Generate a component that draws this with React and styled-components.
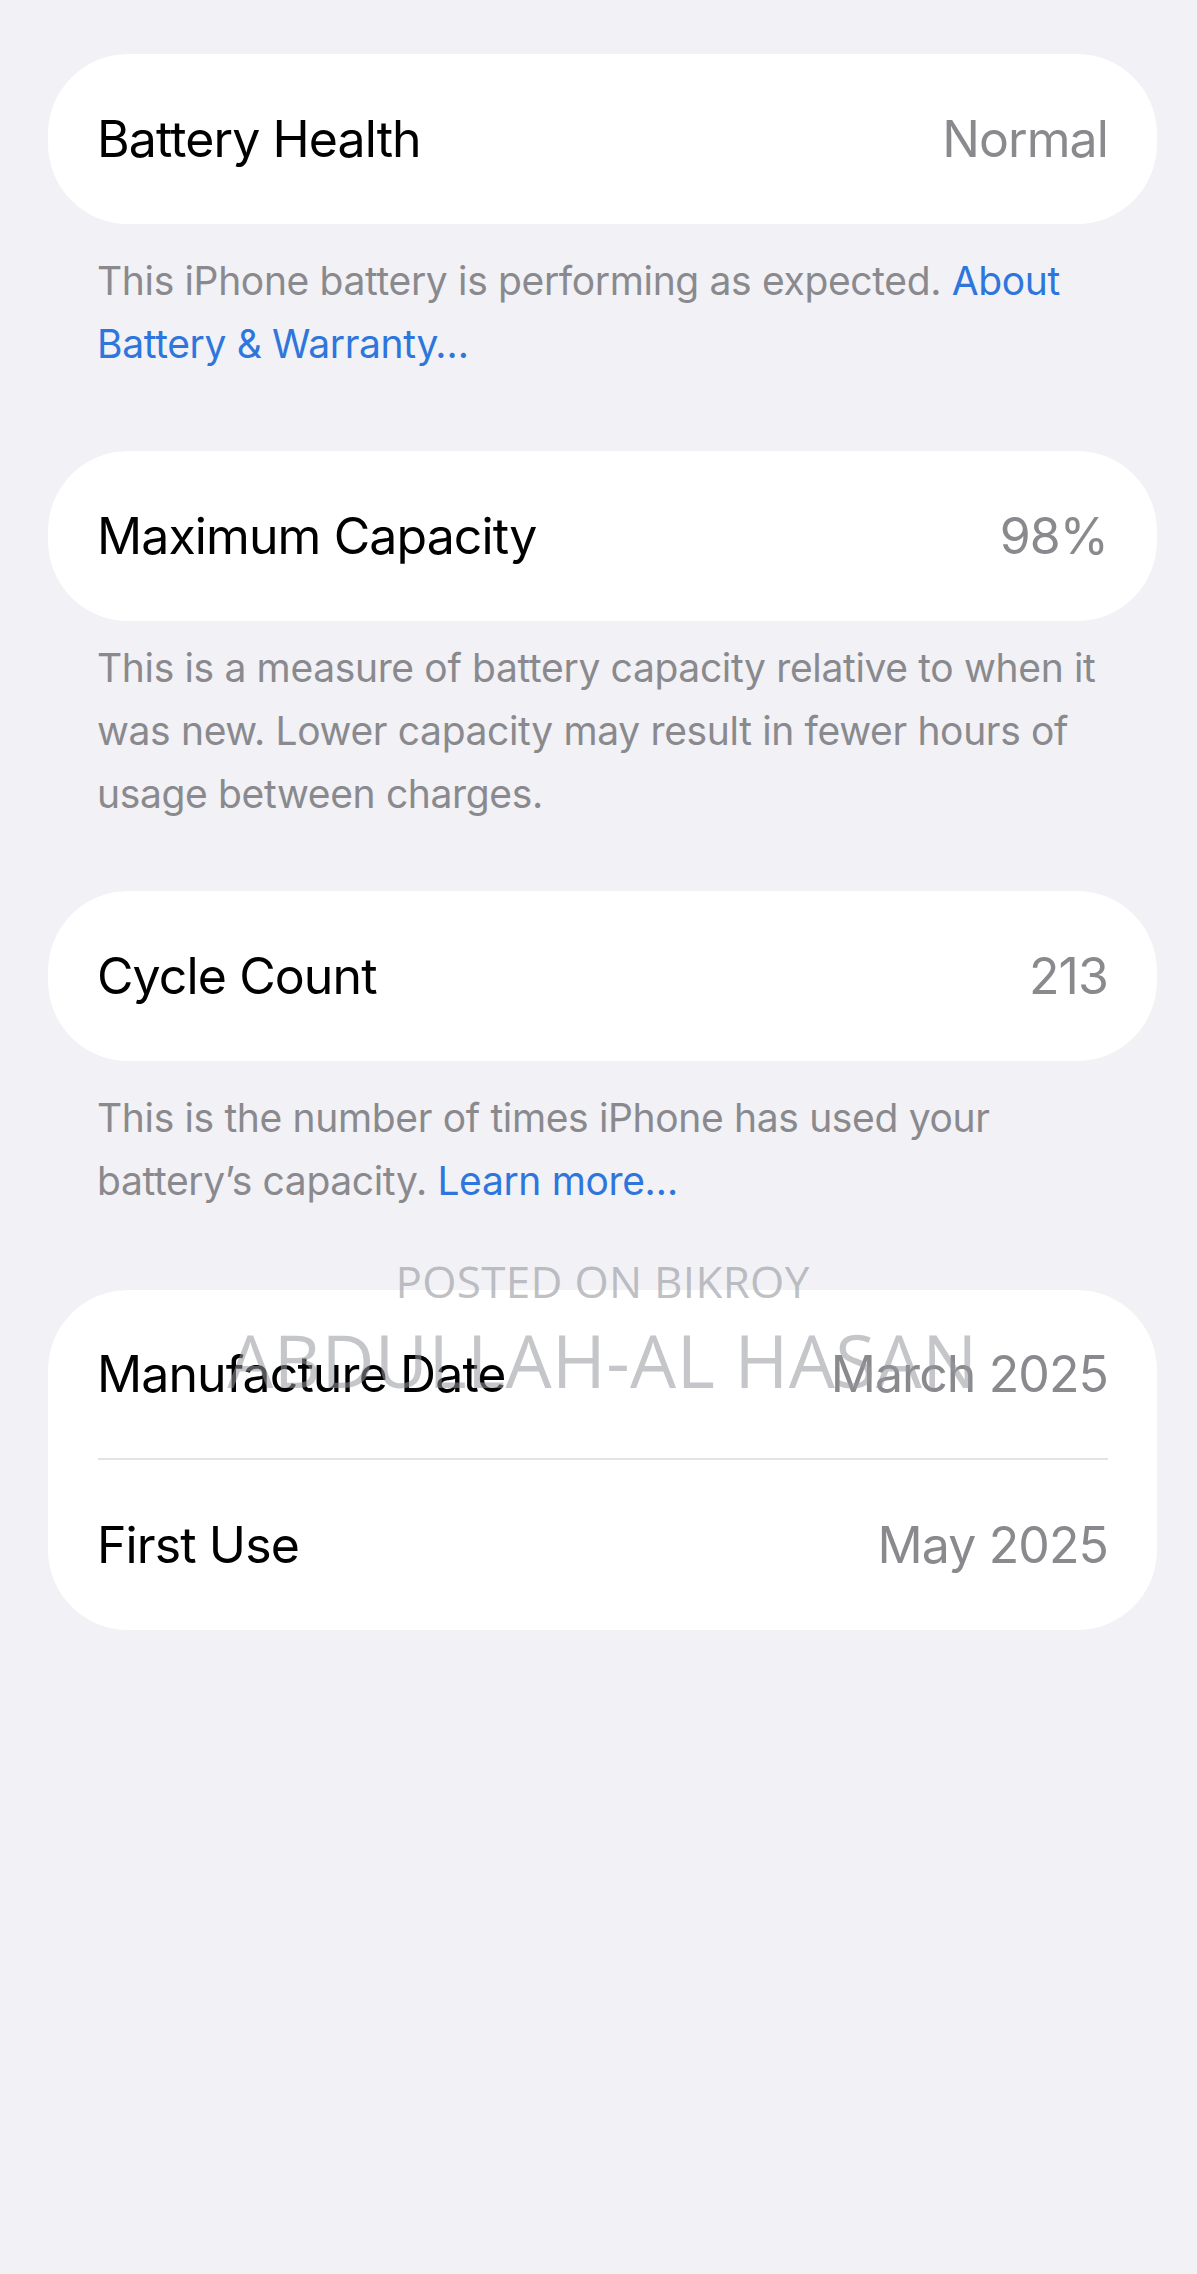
import React from "react";
import styled, { createGlobalStyle } from "styled-components";

const GlobalStyle = createGlobalStyle`
  html, body {
    margin: 0;
    padding: 0;
    background: #f1f1f6;
  }
  body {
    font-family: Inter, "Noto Sans", sans-serif;
    -webkit-font-smoothing: antialiased;
  }
`;

const Page = styled.main`
  min-height: 2274px;
  box-sizing: border-box;
  padding: 54px 40px 0 48px;
  background: #f1f1f6;
`;

const Card = styled.section`
  position: relative;
  background: #ffffff;
  border-radius: 80px;
  display: flex;
  flex-direction: column;
`;

const Row = styled.div`
  height: ${(p) => p.$height || 170}px;
  display: flex;
  align-items: center;
  justify-content: space-between;
  padding: 0 49px 0 49px;
  font-size: 50px;
  letter-spacing: -0.9px;
`;

const Label = styled.span`
  color: #000000;
`;

const Value = styled.span`
  color: #8a8a8e;
`;

const Divider = styled.div`
  margin: 0 49px 0 50px;
  height: 2px;
  background: #e3e3e7;
`;

const Footer = styled.p`
  margin: ${(p) => p.$top}px 0 ${(p) => p.$bottom}px;
  padding: 0 49px 0 49px;
  font-size: 39px;
  line-height: 63px;
  color: #8a8a8e;
  letter-spacing: -0.35px;

  a {
    color: #2f76dc;
    text-decoration: none;
  }
`;

const Watermark = styled.div`
  position: absolute;
  top: -31px;
  left: 0;
  right: 0;
  display: flex;
  flex-direction: column;
  align-items: center;
  gap: 20px;
  font-family: "Open Sans", "Noto Sans", sans-serif;
  pointer-events: none;
`;

const MarkSmall = styled.span`
  font-size: 44px;
  line-height: 44px;
  letter-spacing: 0.3px;
  color: rgba(150, 152, 158, 0.6);
`;

const MarkLarge = styled.span`
  font-size: 73px;
  line-height: 73px;
  letter-spacing: 0.4px;
  color: rgba(150, 152, 156, 0.55);
`;

const InfoCard = ({ label, value }) => (
  <Card>
    <Row>
      <Label>{label}</Label>
      <Value>{value}</Value>
    </Row>
  </Card>
);

export default function App() {
  return (
    <>
      <GlobalStyle />
      <Page>
        <InfoCard label="Battery Health" value="Normal" />
        <Footer $top={25} $bottom={76}>
          This iPhone battery is performing as expected. <a href="#">About</a>
          <br />
          <a href="#">Battery &amp; Warranty…</a>
        </Footer>

        <InfoCard label="Maximum Capacity" value="98%" />
        <Footer $top={15} $bottom={66}>
          This is a measure of battery capacity relative to when it
          <br />
          was new. Lower capacity may result in fewer hours of
          <br />
          usage between charges.
        </Footer>

        <InfoCard label="Cycle Count" value="213" />
        <Footer $top={25} $bottom={78}>
          This is the number of times iPhone has used your
          <br />
          battery’s capacity. <a href="#">Learn more…</a>
        </Footer>

        <Card>
          <Row $height={168}>
            <Label>Manufacture Date</Label>
            <Value>March 2025</Value>
          </Row>
          <Divider />
          <Row>
            <Label>First Use</Label>
            <Value>May 2025</Value>
          </Row>
          <Watermark>
            <MarkSmall>POSTED ON BIKROY</MarkSmall>
            <MarkLarge>ABDULLAH-AL HASAN</MarkLarge>
          </Watermark>
        </Card>
      </Page>
    </>
  );
}
